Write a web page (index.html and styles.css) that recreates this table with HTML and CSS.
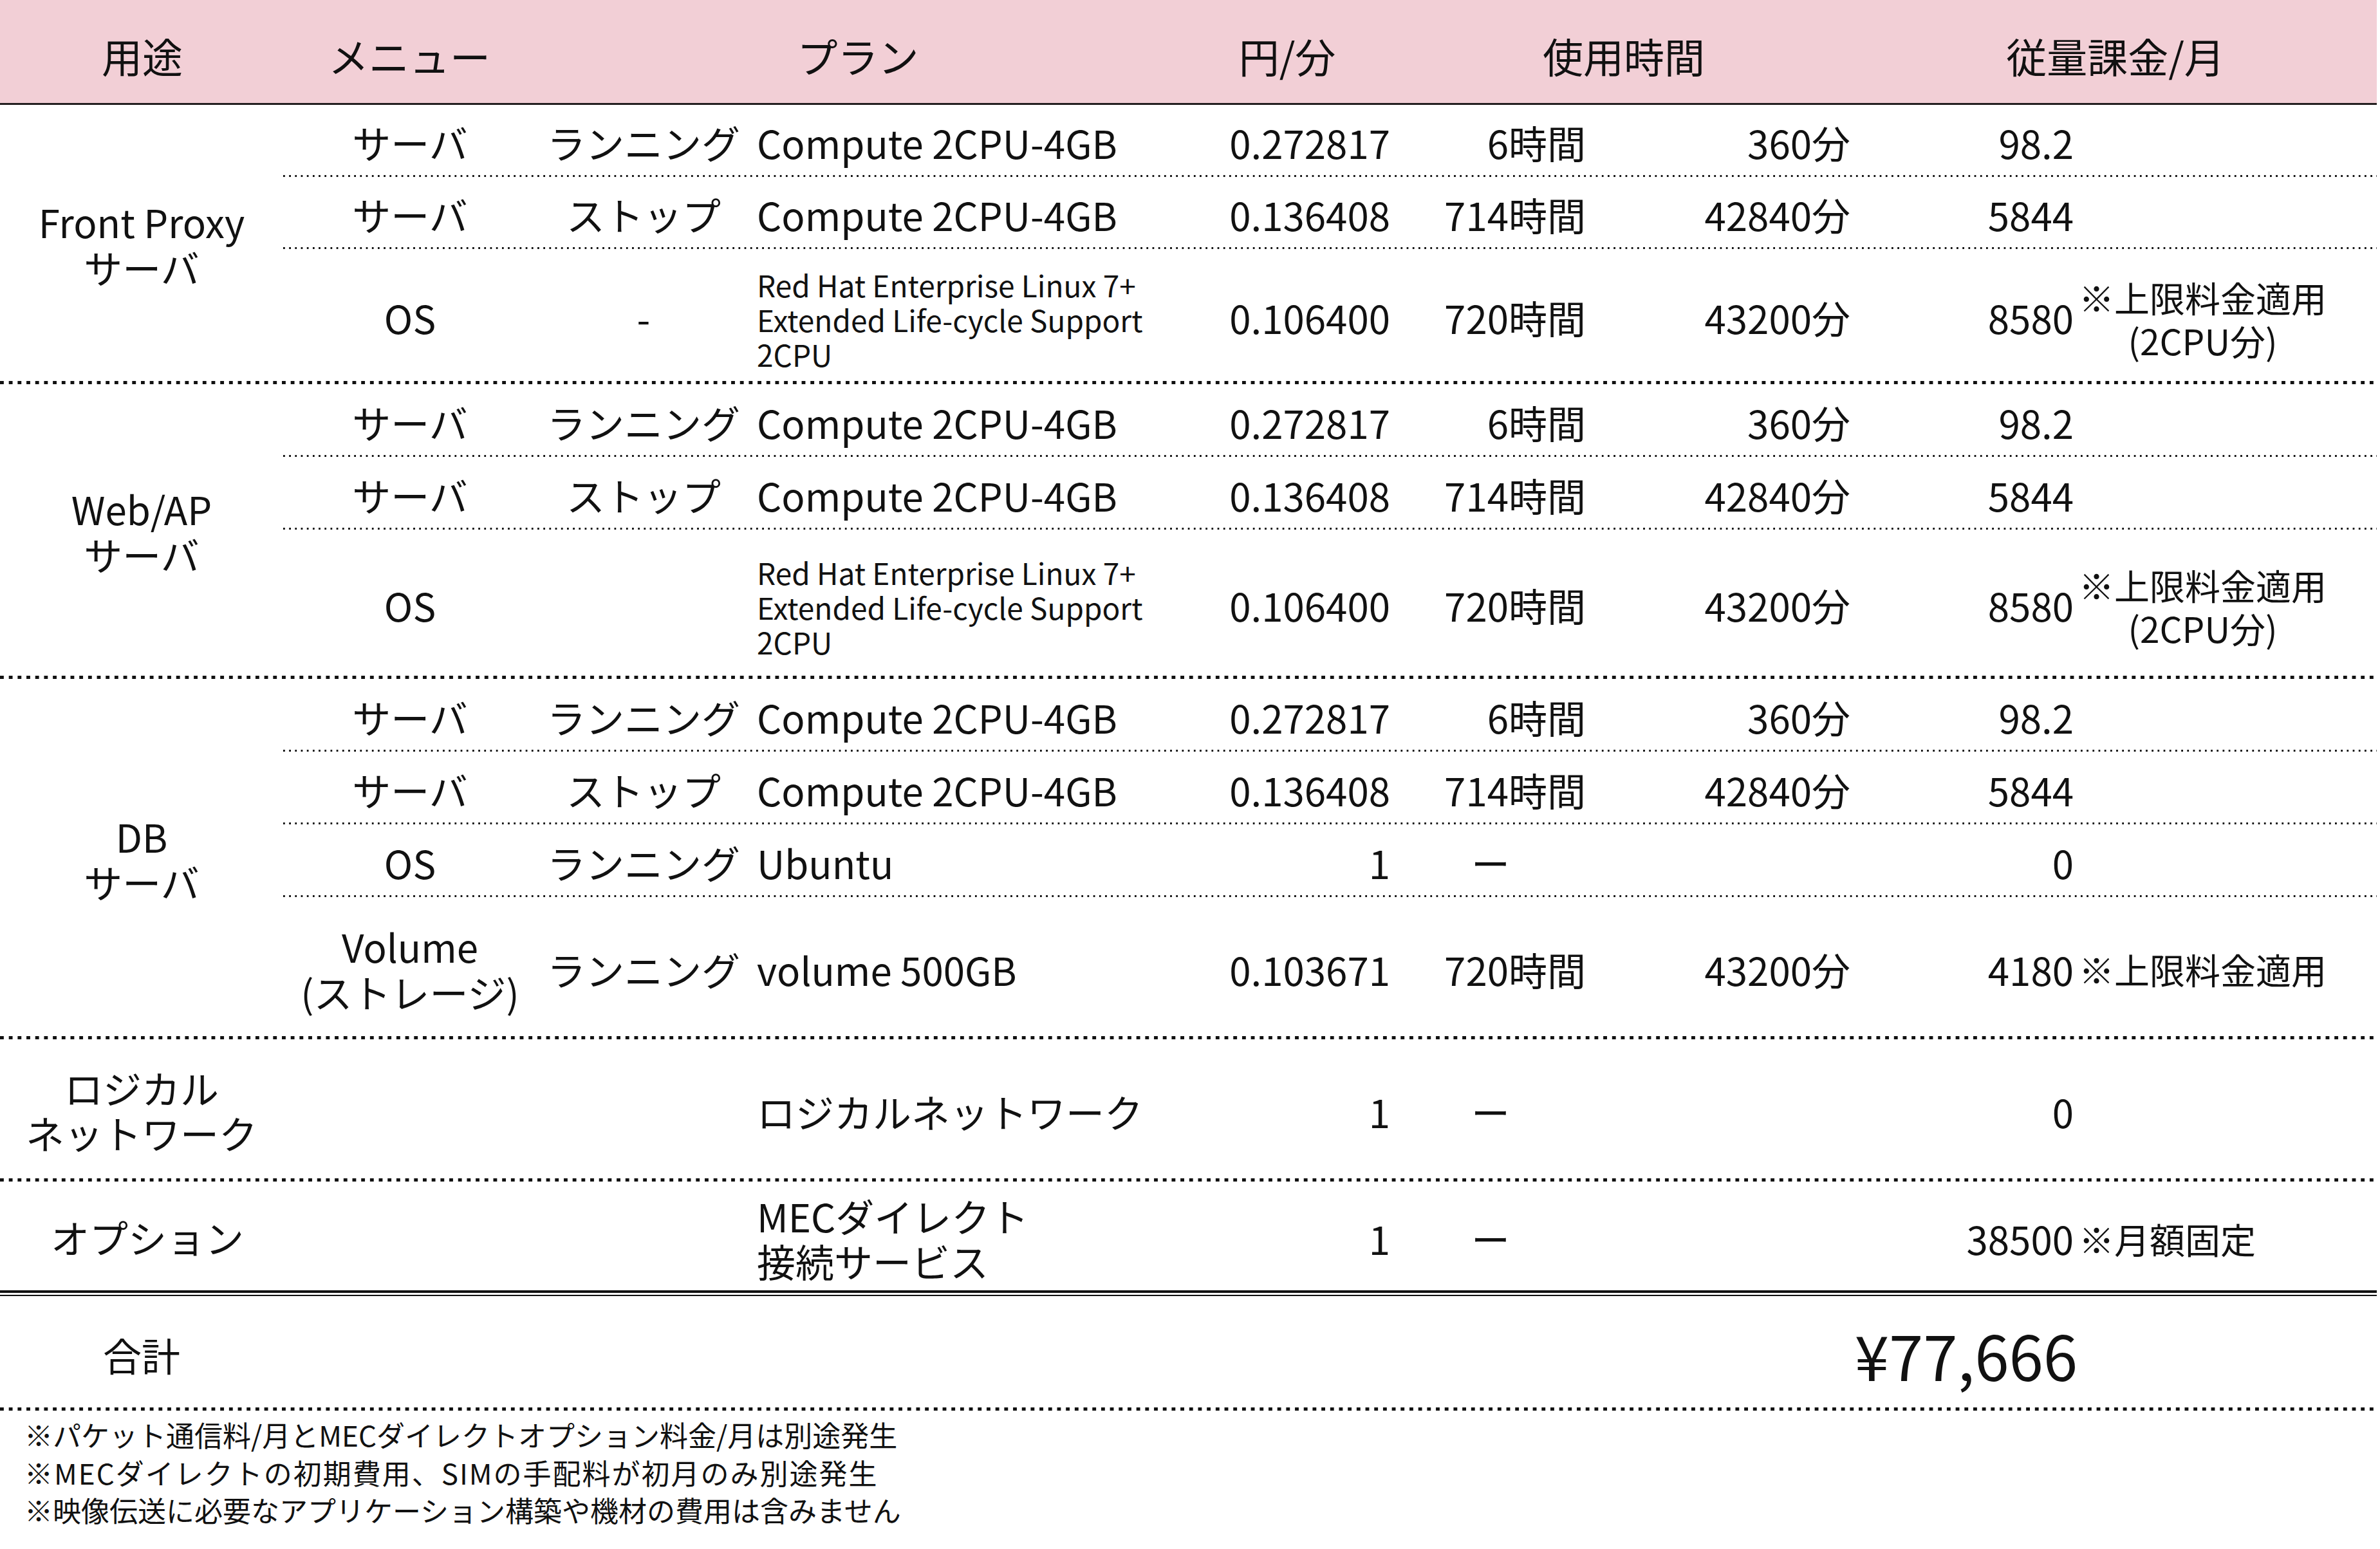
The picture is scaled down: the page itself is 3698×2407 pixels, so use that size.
FILE: index.html
```html
<!DOCTYPE html>
<html lang="ja">
<head>
<meta charset="utf-8">
<title>料金表</title>
<link rel="stylesheet" href="styles.css">
</head>
<body>
<div class="sheet">
  <div class="head">
    <div class="h h-use">用途</div>
    <div class="h h-menu">メニュー</div>
    <div class="h h-plan">プラン</div>
    <div class="h h-rate">円/分</div>
    <div class="h h-time">使用時間</div>
    <div class="h h-fee">従量課金/月</div>
  </div>

  <div class="group g1">
    <div class="label">Front Proxy<br>サーバ</div>
    <div class="rows">
      <div class="row r-s">
        <div class="c menu">サーバ</div><div class="c sub">ランニング</div><div class="c plan">Compute 2CPU-4GB</div>
        <div class="c rate">0.272817</div><div class="c hours">6時間</div><div class="c mins">360分</div>
        <div class="c fee"><span class="val">98.2</span></div>
      </div>
      <div class="row r-s">
        <div class="c menu">サーバ</div><div class="c sub">ストップ</div><div class="c plan">Compute 2CPU-4GB</div>
        <div class="c rate">0.136408</div><div class="c hours">714時間</div><div class="c mins">42840分</div>
        <div class="c fee"><span class="val">5844</span></div>
      </div>
      <div class="row r-os1">
        <div class="c menu">OS</div><div class="c sub">-</div>
        <div class="c plan small">Red Hat Enterprise Linux 7+<br>Extended Life-cycle Support<br>2CPU</div>
        <div class="c rate">0.106400</div><div class="c hours">720時間</div><div class="c mins">43200分</div>
        <div class="c fee"><span class="val">8580</span><span class="note center">※上限料金適用<br>(2CPU分)</span></div>
      </div>
    </div>
  </div>

  <div class="group g2">
    <div class="label">Web/AP<br>サーバ</div>
    <div class="rows">
      <div class="row r-m">
        <div class="c menu">サーバ</div><div class="c sub">ランニング</div><div class="c plan">Compute 2CPU-4GB</div>
        <div class="c rate">0.272817</div><div class="c hours">6時間</div><div class="c mins">360分</div>
        <div class="c fee"><span class="val">98.2</span></div>
      </div>
      <div class="row r-m">
        <div class="c menu">サーバ</div><div class="c sub">ストップ</div><div class="c plan">Compute 2CPU-4GB</div>
        <div class="c rate">0.136408</div><div class="c hours">714時間</div><div class="c mins">42840分</div>
        <div class="c fee"><span class="val">5844</span></div>
      </div>
      <div class="row r-os2">
        <div class="c menu">OS</div><div class="c sub"></div>
        <div class="c plan small">Red Hat Enterprise Linux 7+<br>Extended Life-cycle Support<br>2CPU</div>
        <div class="c rate">0.106400</div><div class="c hours">720時間</div><div class="c mins">43200分</div>
        <div class="c fee"><span class="val">8580</span><span class="note center">※上限料金適用<br>(2CPU分)</span></div>
      </div>
    </div>
  </div>

  <div class="group g3">
    <div class="label">DB<br>サーバ</div>
    <div class="rows">
      <div class="row r-m">
        <div class="c menu">サーバ</div><div class="c sub">ランニング</div><div class="c plan">Compute 2CPU-4GB</div>
        <div class="c rate">0.272817</div><div class="c hours">6時間</div><div class="c mins">360分</div>
        <div class="c fee"><span class="val">98.2</span></div>
      </div>
      <div class="row r-m">
        <div class="c menu">サーバ</div><div class="c sub">ストップ</div><div class="c plan">Compute 2CPU-4GB</div>
        <div class="c rate">0.136408</div><div class="c hours">714時間</div><div class="c mins">42840分</div>
        <div class="c fee"><span class="val">5844</span></div>
      </div>
      <div class="row r-m">
        <div class="c menu">OS</div><div class="c sub">ランニング</div><div class="c plan">Ubuntu</div>
        <div class="c rate">1</div><div class="c hours dash">ー</div><div class="c mins"></div>
        <div class="c fee"><span class="val">0</span></div>
      </div>
      <div class="row r-vol">
        <div class="c menu two">Volume<br>(ストレージ)</div><div class="c sub">ランニング</div><div class="c plan">volume 500GB</div>
        <div class="c rate">0.103671</div><div class="c hours">720時間</div><div class="c mins">43200分</div>
        <div class="c fee"><span class="val">4180</span><span class="note">※上限料金適用</span></div>
      </div>
    </div>
  </div>

  <div class="group g4">
    <div class="label">ロジカル<br>ネットワーク</div>
    <div class="rows">
      <div class="row r-net">
        <div class="c menu"></div><div class="c sub"></div><div class="c plan">ロジカルネットワーク</div>
        <div class="c rate">1</div><div class="c hours dash">ー</div><div class="c mins"></div>
        <div class="c fee"><span class="val">0</span></div>
      </div>
    </div>
  </div>

  <div class="group g5">
    <div class="label label-opt">オプション</div>
    <div class="rows">
      <div class="row r-opt">
        <div class="c menu"></div><div class="c sub"></div><div class="c plan two">MECダイレクト<br>接続サービス</div>
        <div class="c rate">1</div><div class="c hours dash">ー</div><div class="c mins"></div>
        <div class="c fee"><span class="val">38500</span><span class="note">※月額固定</span></div>
      </div>
    </div>
  </div>

  <div class="total">
    <div class="t-label">合計</div>
    <div class="t-value">¥77,666</div>
  </div>

  <div class="notes">
    <p>※パケット通信料/月とMECダイレクトオプション料金/月は別途発生</p>
    <p class="wide">※MECダイレクトの初期費用、SIMの手配料が初月のみ別途発生</p>
    <p>※映像伝送に必要なアプリケーション構築や機材の費用は含みません</p>
  </div>
</div>
</body>
</html>
```

FILE: styles.css
```css
html, body {
  margin: 0;
  padding: 0;
  background: #ffffff;
}

body {
  font-family: "Noto Sans CJK JP", "Noto Sans", sans-serif;
  color: #111;
  font-size: 60px;
  line-height: 1;
}

.sheet {
  width: 3693px;
}

/* header */
.head {
  display: flex;
  align-items: center;
  height: 163px;
  box-sizing: border-box;
  background: #f2cfd6;
  border-bottom: 3px solid #231f20;
  font-size: 63px;
}
.h { text-align: center; padding-top: 10px; }
.h-use { width: 442px; }
.h-menu { width: 388px; }
.h-plan { width: 1006px; }
.h-rate { width: 328px; }
.h-time { width: 718px; }
.h-fee { width: 810px; }

/* groups */
.group {
  display: flex;
  box-sizing: border-box;
  padding-bottom: 5px;
  background-image: linear-gradient(to right, #111 6px, transparent 6px);
  background-size: 13.7px 5px;
  background-repeat: repeat-x;
  background-position: left bottom;
}
.g1 { height: 434px; }
.g2 { height: 458px; }
.g3 { height: 560px; }
.g4 { height: 221px; }
.g5 {
  height: 173px;
  padding-bottom: 0;
  background: none;
  border-bottom: 4px solid #111;
}

.label {
  width: 440px;
  flex: none;
  display: flex;
  align-items: center;
  justify-content: center;
  text-align: center;
  line-height: 1.17;
  padding-top: 4px;
  box-sizing: border-box;
}
.label-opt { padding-left: 18px; }

.rows {
  flex: 1;
  display: flex;
  flex-direction: column;
}

.row {
  display: flex;
  align-items: center;
  box-sizing: border-box;
  padding-top: 7px;
}
.row:not(:last-child) {
  padding-bottom: 3px;
  background-image: linear-gradient(to right, #111 3px, transparent 3px);
  background-size: 9.2px 3px;
  background-repeat: repeat-x;
  background-position: left bottom;
}
.r-s { height: 112px; }
.r-m { height: 113px; }
.r-os1 { height: 205px; }
.r-os2 { height: 227px; }
.r-vol { height: 216px; }
.r-net { height: 216px; }
.r-opt { height: 169px; }

.c { flex: none; white-space: nowrap; }
.menu { width: 394px; text-align: center; }
.sub { width: 332px; text-align: center; }
.plan { width: 664px; padding-left: 10px; }
.rate { width: 320px; text-align: right; }
.hours { width: 304px; text-align: right; }
.hours.dash { text-align: center; padding-left: 8px; box-sizing: border-box; }
.mins { width: 411px; text-align: right; }
.fee { display: flex; align-items: center; }
.val { width: 347px; text-align: right; }

.two { line-height: 1.17; }

.small {
  font-size: 46px;
  line-height: 54px;
  padding-top: 6px;
}

.note {
  font-size: 55px;
  line-height: 67px;
  padding-left: 8px;
}
.note.center { text-align: center; padding-top: 4px; }

/* total */
.total {
  display: flex;
  align-items: center;
  height: 180px;
  box-sizing: border-box;
  margin-top: 3px;
  border-top: 2px solid #111;
  padding-bottom: 5px;
  background-image: linear-gradient(to right, #111 6px, transparent 6px);
  background-size: 13.7px 5px;
  background-repeat: repeat-x;
  background-position: left bottom;
}
.t-label {
  width: 440px;
  text-align: center;
  padding-top: 8px;
}
.t-value {
  width: 2788px;
  text-align: right;
  font-size: 96px;
  padding-top: 8px;
}

/* notes */
.notes {
  padding: 8px 0 0 38px;
  font-size: 44px;
  line-height: 58.5px;
}
.notes p { margin: 0; }
.notes .wide { letter-spacing: 2px; }
```
